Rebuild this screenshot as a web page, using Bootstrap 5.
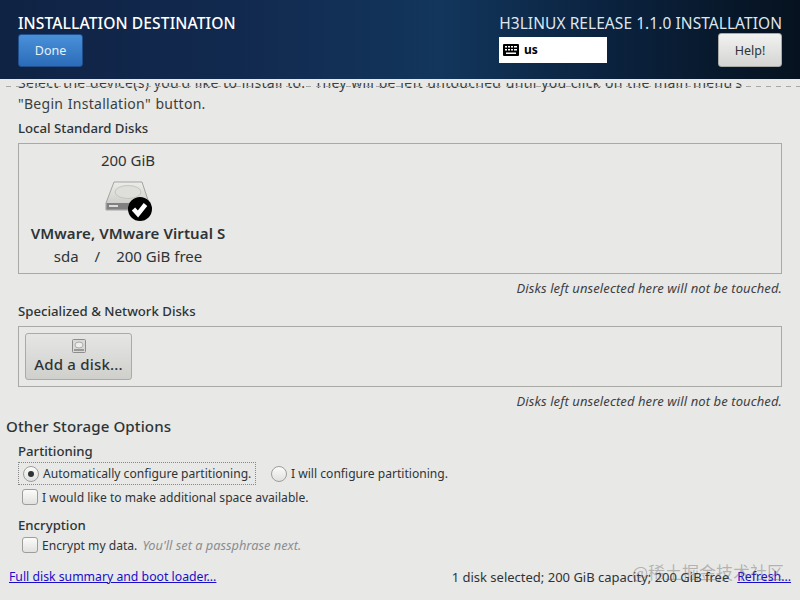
<!DOCTYPE html>
<html lang="en"><head><meta charset="utf-8"><title>Installation Destination</title>
<link href="https://cdn.jsdelivr.net/npm/bootstrap@5.3.0/dist/css/bootstrap.min.css" rel="stylesheet">
<style>
html,body{width:800px;height:600px;overflow:hidden}
body{background:#e8e8e7;color:#2e3436;font-family:"Noto Sans","Liberation Sans",sans-serif;font-size:14px;position:relative}
.hdr{height:79px;background:linear-gradient(90deg,#0f2344 0%,#12294f 30%,#12365c 55%,#0b2340 75%,#06121f 100%);color:#fff;padding:13px 18px 0 18px}
.hdr-title{font-size:15.6px;font-weight:500;line-height:20px;letter-spacing:.1px}
.hdr-rel{font-size:15.5px;line-height:20px;color:#dfe6ee;letter-spacing:.06px;white-space:nowrap}
.done-btn{width:65px;height:33px;margin-top:1px;background:linear-gradient(#4a90d9,#2b6cb8);border:1px solid #1f4f8f;border-radius:3px;color:#e8f0f8;font-size:12.5px;padding:0;line-height:28px}
.help-btn{width:64px;height:34px;background:linear-gradient(#f2f2f1,#d4d4d2);border:1px solid #a9a9a5;border-radius:3px;color:#2e3436;font-size:12.5px;padding:0;line-height:29px}
.kbd-box{width:108px;height:26px;background:#fff;color:#000;font-size:12px;font-weight:700;gap:5px;padding-left:4px;margin-top:4px}
.rel-col{width:283px}
.scroller{height:517px;margin-top:4px;overflow:hidden;padding:0 18px 0 18px}
.intro{margin:-11px 0 0 0;font-size:14px;line-height:21px;letter-spacing:.28px;word-spacing:.6px;color:#3a3f41;white-space:pre}
.edge-dash{position:absolute;left:6px;right:0;top:86px;height:1px;background:repeating-linear-gradient(90deg,#a8a8a6 0 5px,transparent 5px 10px)}
.sect{font-size:13.2px;font-weight:500;line-height:17px;color:#2e3436}
.disk-frame{border:1px solid #a9a9a6;margin-top:6px}
.disk-one{height:131px;padding-top:6px}
.disk-cell{width:220px;text-align:center;margin-left:-1px}
.disk-size{font-size:15px;line-height:20px}
.disk-ico{height:45px;margin-top:8px}
.disk-name{font-size:15px;font-weight:600;line-height:20px;letter-spacing:.1px}
.disk-sub{font-size:15px;line-height:20px;margin-top:3px;gap:16px}
.note{font-size:13px;font-style:italic;text-align:right;line-height:17px;margin-top:6px;color:#3c4143;letter-spacing:.1px}
.net-label{margin-top:6px}
.disk-two{height:61px;padding:6px 0 0 6px;margin-top:6px}
.add-btn{width:107px;height:47px;background:linear-gradient(#e6e6e4,#cfcfcc);border:1px solid #aaa;border-radius:3px;font-size:15px;font-weight:500;color:#2e3436;line-height:18px;padding:5px 0 0 0;letter-spacing:.2px;gap:2px}
.other{font-size:15.1px;font-weight:500;line-height:20px;margin:6px 0 0 -12px;letter-spacing:.1px}
.part{margin-top:7px}
.opt{font-size:12.1px;line-height:17px;color:#2e3436;white-space:nowrap}
.focus-box{border:1px dotted #888;height:23px;width:238px;padding-left:4px;gap:4px;margin-top:2px}
.rb{width:16px;height:16px;border-radius:50%;border:1px solid #9d9d99;background:linear-gradient(#fbfbfa,#e1e1df);flex:none;position:relative}
.rb.on::after{content:"";position:absolute;left:4px;top:4px;width:6px;height:6px;border-radius:50%;background:#2e3436}
.cb{width:16px;height:16px;border-radius:3px;border:1px solid #9d9d99;background:linear-gradient(#fbfbfa,#e1e1df);flex:none}
.opt2{gap:4px;margin:2px 0 0 15px}
.cb-row{gap:4px;margin:2px 0 0 4px;height:20px}
.cb-enc{margin-top:1px}
.enc{margin-top:10px}
.hint{color:#8b8e8f;font-style:italic;font-size:12.8px;margin-left:2px}
.foot{position:absolute;left:9px;right:9px;top:568px;font-size:12.25px;line-height:18px}
.foot a{color:#1a0dc9}
.stat{font-size:13px}
.mark-w{position:absolute;left:632px;top:561px;font-size:17px;line-height:22px;color:rgba(90,90,90,.38);font-family:"Noto Sans CJK SC",sans-serif;white-space:nowrap}
</style></head>
<body>
<header class="hdr d-flex justify-content-between">
  <div>
    <div class="hdr-title">INSTALLATION DESTINATION</div>
    <button class="btn done-btn">Done</button>
  </div>
  <div class="d-flex flex-column rel-col">
    <div class="hdr-rel text-end">H3LINUX RELEASE 1.1.0 INSTALLATION</div>
    <div class="d-flex justify-content-between align-items-start">
      <div class="kbd-box d-flex align-items-center">
        <svg width="16" height="12" viewBox="0 0 16 12"><rect width="16" height="12" rx="1" fill="#000"/><g fill="#fff"><rect x="2" y="2" width="2" height="1.5"/><rect x="5" y="2" width="2" height="1.5"/><rect x="8" y="2" width="2" height="1.5"/><rect x="11" y="2" width="3" height="1.5"/><rect x="2" y="5" width="2" height="1.5"/><rect x="5" y="5" width="2" height="1.5"/><rect x="8" y="5" width="2" height="1.5"/><rect x="11" y="5" width="3" height="1.5"/><rect x="3" y="8.500" width="10" height="1.5"/></g></svg>
        <span>us</span>
      </div>
      <button class="btn help-btn">Help!</button>
    </div>
  </div>
</header>
<main class="scroller">
  <p class="intro">Select the device(s) you'd like to install to.  They will be left untouched until you click on the main menu's
"Begin Installation" button.</p>
  <div class="sect" style="margin-top:6px">Local Standard Disks</div>
  <div class="disk-frame disk-one">
    <div class="disk-cell">
      <div class="disk-size">200 GiB</div>
      <div class="disk-ico">
        <svg width="56" height="45" viewBox="0 0 56 45">
          <defs><linearGradient id="dk" x1="0" y1="0" x2="0" y2="1"><stop offset="0" stop-color="#ececea"/><stop offset="1" stop-color="#c6c6c2"/></linearGradient></defs>
          <path d="M14 4H42L49 25V32H6V25Z" fill="url(#dk)" stroke="#a3a39f"/>
          <ellipse cx="28" cy="14" rx="13" ry="6.500" fill="#dededb" stroke="#c4c4c0"/>
          <rect x="6.500" y="25" width="42" height="6.500" fill="#808083"/>
          <rect x="9" y="27" width="9" height="2" fill="#dcdcda"/>
          <circle cx="40" cy="31" r="12" fill="#000"/>
          <path d="M33.500 31l4.500 5 7.500-9.500" fill="none" stroke="#fff" stroke-width="4.500"/>
        </svg>
      </div>
      <div class="disk-name">VMware, VMware Virtual S</div>
      <div class="disk-sub d-flex justify-content-center"><span>sda</span><span>/</span><span>200 GiB free</span></div>
    </div>
  </div>
  <div class="note">Disks left unselected here will not be touched.</div>
  <div class="sect net-label">Specialized &amp; Network Disks</div>
  <div class="disk-frame disk-two">
    <button class="btn add-btn d-flex flex-column align-items-center">
      <svg width="14" height="14" viewBox="0 0 14 14"><rect x=".5" y=".5" width="13" height="13" rx="1" fill="#d9d9d7" stroke="#8d8d8a"/><ellipse cx="7" cy="6" rx="4" ry="3" fill="#eee" stroke="#aaa"/><rect x="2" y="10" width="10" height="2" fill="#999"/></svg>
      <span>Add a disk...</span>
    </button>
  </div>
  <div class="note">Disks left unselected here will not be touched.</div>
  <div class="other">Other Storage Options</div>
  <div class="sect part">Partitioning</div>
  <div class="d-flex align-items-center">
    <div class="focus-box d-flex align-items-center opt"><span class="rb on"></span><span>Automatically configure partitioning.</span></div>
    <div class="d-flex align-items-center opt opt2"><span class="rb"></span><span>I will configure partitioning.</span></div>
  </div>
  <div class="d-flex align-items-center opt cb-row"><span class="cb"></span><span>I would like to make additional space available.</span></div>
  <div class="sect enc">Encryption</div>
  <div class="d-flex align-items-center opt cb-row cb-enc"><span class="cb"></span><span>Encrypt my data. <span class="hint">You'll set a passphrase next.</span></span></div>
</main>
<div class="edge-dash"></div>
<footer class="foot d-flex justify-content-between">
  <a href="#">Full disk summary and boot loader...</a>
  <div class="d-flex gap-2"><span class="stat">1 disk selected; 200 GiB capacity; 200 GiB free</span><a href="#">Refresh...</a></div>
</footer>
<div class="mark-w">@稀土掘金技术社区</div>
<script src="https://cdn.jsdelivr.net/npm/bootstrap@5.3.0/dist/js/bootstrap.bundle.min.js"></script>
</body></html>
